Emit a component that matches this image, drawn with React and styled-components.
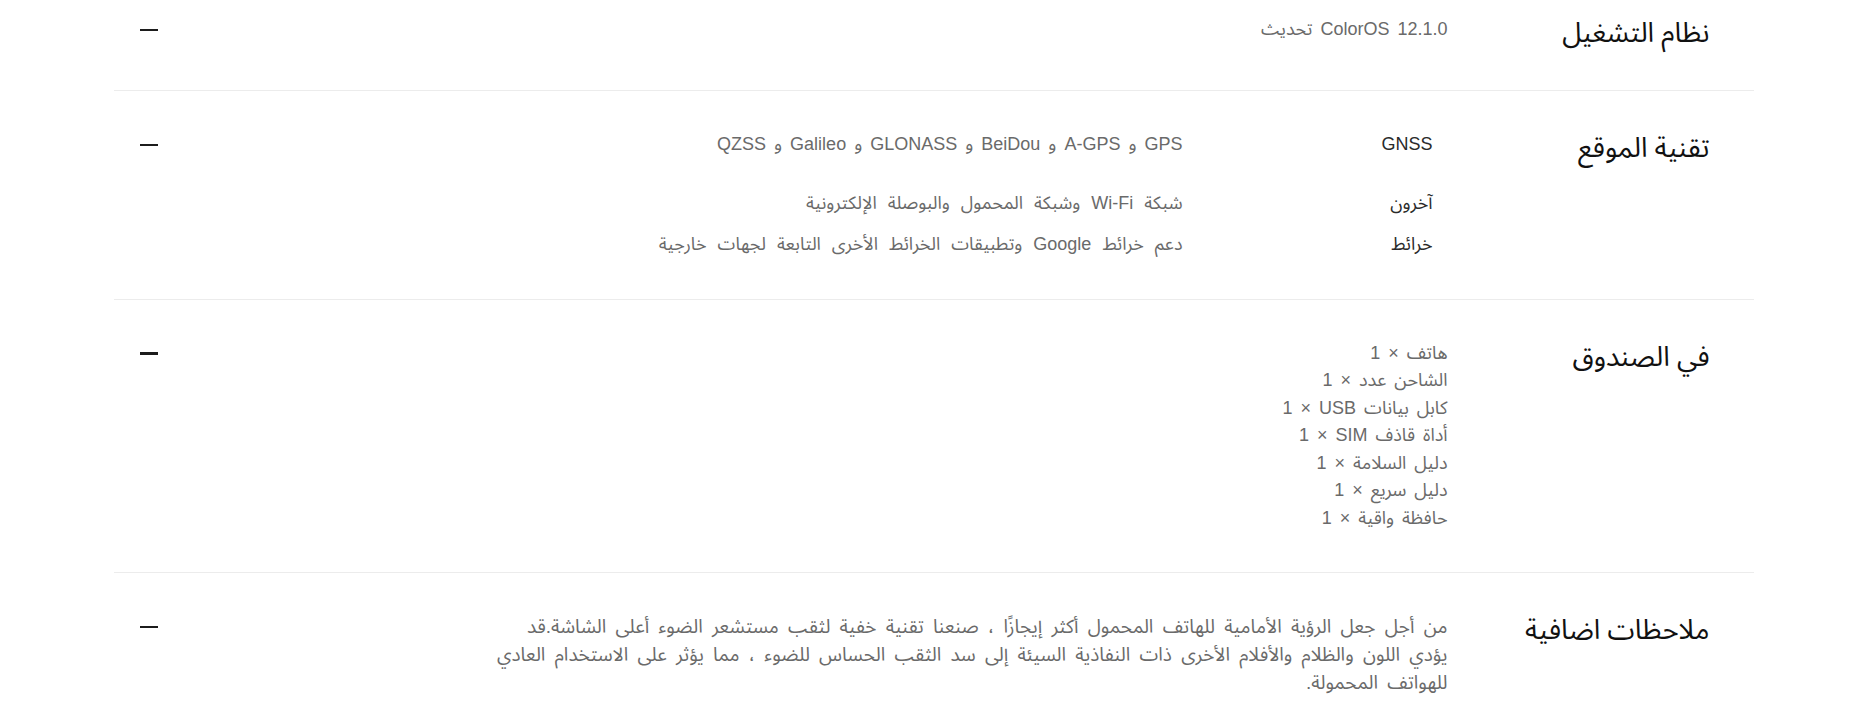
import React from "react";
import styled, { createGlobalStyle } from "styled-components";

const GlobalStyle = createGlobalStyle`
  body {
    margin: 0;
    background: #fff;
    font-family: "Liberation Sans", "Noto Sans Arabic", "DejaVu Sans", sans-serif;
  }
`;

const Page = styled.div`
  direction: rtl;
  width: 1640px;
  margin: 0 auto;
`;

const Row = styled.section`
  display: flex;
  align-items: flex-start;
  padding: ${(p) => (p.first ? "16px" : "40px")} 44px 40px 26px;
  border-bottom: 1px solid #ececec;
`;

const Title = styled.h3`
  flex: 0 0 262px;
  margin: 0;
  font-family: "Noto Sans Arabic", "DejaVu Sans", sans-serif;
  font-size: 27.5px;
  line-height: 34px;
  font-weight: 400;
  color: #111;
`;

const Content = styled.div`
  flex: 1;
  font-size: 18px;
  line-height: 27.5px;
  word-spacing: 3px;
  color: #6a6a6a;
`;

const Toggle = styled.button`
  flex: 0 0 18px;
  height: 28px;
  padding: 0;
  border: 0;
  background: none;
  display: flex;
  align-items: center;
  cursor: pointer;

  &::before {
    content: "";
    display: block;
    width: 18px;
    height: 2.5px;
    background: #1c1c1c;
  }
`;

const SubList = styled.div`
  display: flex;
  flex-direction: column;
  gap: 14px;
  padding-right: 15px;
`;

const SubRow = styled.div`
  display: flex;
  margin-bottom: ${(p) => (p.spaced ? "17px" : "0")};
`;

const SubLabel = styled.div`
  flex: 0 0 250px;
  color: #2a2a2a;
`;

const SubValue = styled.div`
  flex: 1;
  word-spacing: ${(p) => (p.arabic ? "6px" : "3px")};
`;

const Items = styled.ul`
  list-style: none;
  margin: 0;
  padding: 0;
`;

const Paragraph = styled.p`
  margin: 0;
  max-width: 1000px;
  font-size: 19px;
  line-height: 28px;
  word-spacing: 4px;
`;

const RLM = "\u200F";

const boxItems = [
  "هاتف × 1",
  "الشاحن عدد × 1",
  `كابل بيانات USB${RLM} × 1`,
  `أداة قاذف SIM${RLM} × 1`,
  "دليل السلامة × 1",
  "دليل سريع × 1",
  "حافظة واقية × 1",
];

const location = [
  { label: "GNSS", value: "GPS و A-GPS و BeiDou و GLONASS و Galileo و QZSS", spaced: true },
  { label: "آخرون", value: "شبكة Wi-Fi وشبكة المحمول والبوصلة الإلكترونية", arabic: true },
  { label: "خرائط", value: "دعم خرائط Google وتطبيقات الخرائط الأخرى التابعة لجهات خارجية", arabic: true },
];

export default function App() {
  return (
    <Page>
      <GlobalStyle />
      <Row first>
        <Title>نظام التشغيل</Title>
        <Content>ColorOS 12.1.0 تحديث</Content>
        <Toggle aria-label="طي" />
      </Row>

      <Row>
        <Title>تقنية الموقع</Title>
        <Content>
          <SubList>
            {location.map((s) => (
              <SubRow key={s.label} spaced={s.spaced}>
                <SubLabel>{s.label}</SubLabel>
                <SubValue arabic={s.arabic}>{s.value}</SubValue>
              </SubRow>
            ))}
          </SubList>
        </Content>
        <Toggle aria-label="طي" />
      </Row>

      <Row>
        <Title>في الصندوق</Title>
        <Content>
          <Items>
            {boxItems.map((item) => (
              <li key={item}>{item}</li>
            ))}
          </Items>
        </Content>
        <Toggle aria-label="طي" />
      </Row>

      <Row>
        <Title>ملاحظات اضافية</Title>
        <Content>
          <Paragraph>
            من أجل جعل الرؤية الأمامية للهاتف المحمول أكثر إيجازًا ، صنعنا تقنية خفية لثقب مستشعر الضوء أعلى الشاشة.قد
            <br />
            يؤدي اللون والظلام والأفلام الأخرى ذات النفاذية السيئة إلى سد الثقب الحساس للضوء ، مما يؤثر على الاستخدام العادي
            <br />
            للهواتف المحمولة.
          </Paragraph>
        </Content>
        <Toggle aria-label="طي" />
      </Row>
    </Page>
  );
}
